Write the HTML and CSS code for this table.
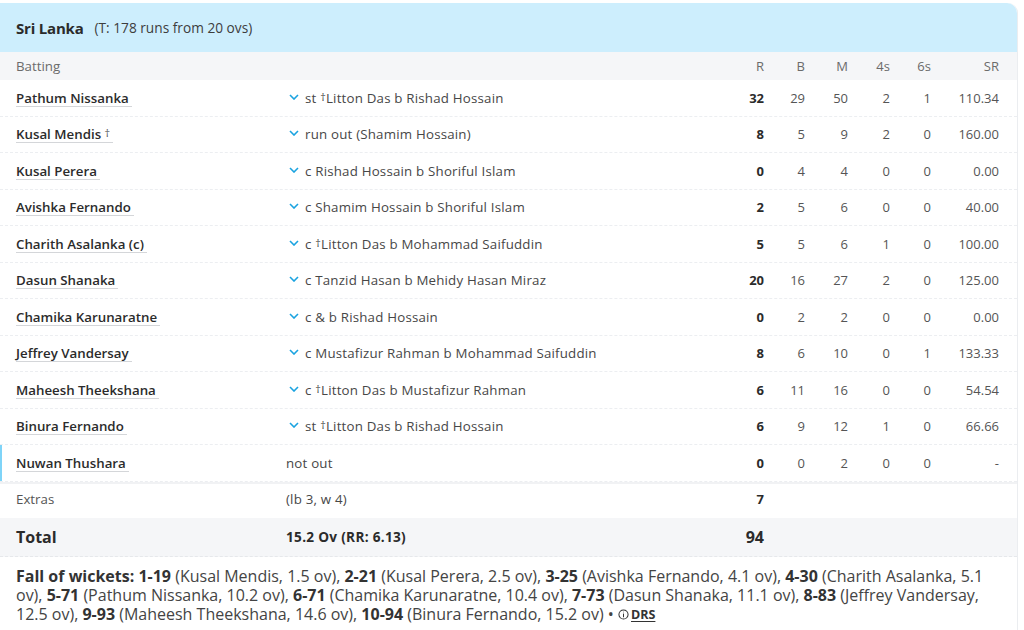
FILE: index.html
```html
<!DOCTYPE html>
<html lang="en">
<head>
<meta charset="utf-8">
<title>Sri Lanka scorecard</title>
<link rel="stylesheet" href="styles.css">
</head>
<body>
<div class="card">
  <div class="card-head">
    <span class="team">Sri Lanka</span>
    <span class="target">(T: 178 runs from 20 ovs)</span>
  </div>

  <div class="row head-row">
    <div class="c-name">Batting</div>
    <div class="c-dis"></div>
    <div class="num">R</div>
    <div class="num">B</div>
    <div class="num">M</div>
    <div class="num">4s</div>
    <div class="num">6s</div>
    <div class="num">SR</div>
  </div>

  <div class="row">
    <div class="c-name"><span class="pname">Pathum Nissanka</span></div>
    <div class="c-dis"><svg class="chev" viewBox="0 0 10 6"><polyline points="1,1 5,5 9,1"/></svg><span>st <span class="dg">†</span>Litton Das b Rishad Hossain</span></div>
    <div class="num runs">32</div><div class="num">29</div><div class="num">50</div><div class="num">2</div><div class="num">1</div><div class="num">110.34</div>
  </div>
  <div class="row">
    <div class="c-name"><span class="pname">Kusal Mendis <span class="dg2">†</span></span></div>
    <div class="c-dis"><svg class="chev" viewBox="0 0 10 6"><polyline points="1,1 5,5 9,1"/></svg><span>run out (Shamim Hossain)</span></div>
    <div class="num runs">8</div><div class="num">5</div><div class="num">9</div><div class="num">2</div><div class="num">0</div><div class="num">160.00</div>
  </div>
  <div class="row">
    <div class="c-name"><span class="pname">Kusal Perera</span></div>
    <div class="c-dis"><svg class="chev" viewBox="0 0 10 6"><polyline points="1,1 5,5 9,1"/></svg><span>c Rishad Hossain b Shoriful Islam</span></div>
    <div class="num runs">0</div><div class="num">4</div><div class="num">4</div><div class="num">0</div><div class="num">0</div><div class="num">0.00</div>
  </div>
  <div class="row">
    <div class="c-name"><span class="pname">Avishka Fernando</span></div>
    <div class="c-dis"><svg class="chev" viewBox="0 0 10 6"><polyline points="1,1 5,5 9,1"/></svg><span>c Shamim Hossain b Shoriful Islam</span></div>
    <div class="num runs">2</div><div class="num">5</div><div class="num">6</div><div class="num">0</div><div class="num">0</div><div class="num">40.00</div>
  </div>
  <div class="row">
    <div class="c-name"><span class="pname">Charith Asalanka (c)</span></div>
    <div class="c-dis"><svg class="chev" viewBox="0 0 10 6"><polyline points="1,1 5,5 9,1"/></svg><span>c <span class="dg">†</span>Litton Das b Mohammad Saifuddin</span></div>
    <div class="num runs">5</div><div class="num">5</div><div class="num">6</div><div class="num">1</div><div class="num">0</div><div class="num">100.00</div>
  </div>
  <div class="row">
    <div class="c-name"><span class="pname">Dasun Shanaka</span></div>
    <div class="c-dis"><svg class="chev" viewBox="0 0 10 6"><polyline points="1,1 5,5 9,1"/></svg><span>c Tanzid Hasan b Mehidy Hasan Miraz</span></div>
    <div class="num runs">20</div><div class="num">16</div><div class="num">27</div><div class="num">2</div><div class="num">0</div><div class="num">125.00</div>
  </div>
  <div class="row">
    <div class="c-name"><span class="pname">Chamika Karunaratne</span></div>
    <div class="c-dis"><svg class="chev" viewBox="0 0 10 6"><polyline points="1,1 5,5 9,1"/></svg><span>c &amp; b Rishad Hossain</span></div>
    <div class="num runs">0</div><div class="num">2</div><div class="num">2</div><div class="num">0</div><div class="num">0</div><div class="num">0.00</div>
  </div>
  <div class="row">
    <div class="c-name"><span class="pname">Jeffrey Vandersay</span></div>
    <div class="c-dis"><svg class="chev" viewBox="0 0 10 6"><polyline points="1,1 5,5 9,1"/></svg><span>c Mustafizur Rahman b Mohammad Saifuddin</span></div>
    <div class="num runs">8</div><div class="num">6</div><div class="num">10</div><div class="num">0</div><div class="num">1</div><div class="num">133.33</div>
  </div>
  <div class="row">
    <div class="c-name"><span class="pname">Maheesh Theekshana</span></div>
    <div class="c-dis"><svg class="chev" viewBox="0 0 10 6"><polyline points="1,1 5,5 9,1"/></svg><span>c <span class="dg">†</span>Litton Das b Mustafizur Rahman</span></div>
    <div class="num runs">6</div><div class="num">11</div><div class="num">16</div><div class="num">0</div><div class="num">0</div><div class="num">54.54</div>
  </div>
  <div class="row">
    <div class="c-name"><span class="pname">Binura Fernando</span></div>
    <div class="c-dis"><svg class="chev" viewBox="0 0 10 6"><polyline points="1,1 5,5 9,1"/></svg><span>st <span class="dg">†</span>Litton Das b Rishad Hossain</span></div>
    <div class="num runs">6</div><div class="num">9</div><div class="num">12</div><div class="num">1</div><div class="num">0</div><div class="num">66.66</div>
  </div>
  <div class="row active">
    <div class="c-name"><span class="pname">Nuwan Thushara</span></div>
    <div class="c-dis plain"><span>not out</span></div>
    <div class="num runs">0</div><div class="num">0</div><div class="num">2</div><div class="num">0</div><div class="num">0</div><div class="num">-</div>
  </div>

  <div class="row extras">
    <div class="c-name light">Extras</div>
    <div class="c-dis plain"><span>(lb 3, w 4)</span></div>
    <div class="num runs">7</div>
  </div>

  <div class="row total">
    <div class="c-name tot-label">Total</div>
    <div class="c-dis tot-ov"><span>15.2 Ov (RR: 6.13)</span></div>
    <div class="num tot-runs">94</div>
  </div>

  <div class="fow">
    <b>Fall of wickets:</b> <b>1-19</b> (Kusal Mendis, 1.5 ov), <b>2-21</b> (Kusal Perera, 2.5 ov), <b>3-25</b> (Avishka Fernando, 4.1 ov), <b>4-30</b> (Charith Asalanka, 5.1 ov), <b>5-71</b> (Pathum Nissanka, 10.2 ov), <b>6-71</b> (Chamika Karunaratne, 10.4 ov), <b>7-73</b> (Dasun Shanaka, 11.1 ov), <b>8-83</b> (Jeffrey Vandersay, 12.5 ov), <b>9-93</b> (Maheesh Theekshana, 14.6 ov), <b>10-94</b> (Binura Fernando, 15.2 ov) &bull; <span class="drs"><svg class="info" viewBox="0 0 12 12"><circle cx="6" cy="6" r="5"/><line x1="6" y1="5" x2="6" y2="9"/><line x1="6" y1="3" x2="6" y2="3.6"/></svg><span class="drs-t">DRS</span></span>
  </div>
</div>
</body>
</html>
```

FILE: styles.css
```css
* { box-sizing: border-box; }

html, body {
  margin: 0;
  padding: 0;
  background: #ffffff;
}

body {
  font-family: "Open Sans", "Noto Sans", sans-serif;
  color: #2b2b2b;
  padding-top: 3px;
}

.card {
  width: 1018px;
  border-right: 1px solid #ebedf0;
  border-top-right-radius: 10px;
  background: #ffffff;
}

.card-head {
  height: 49px;
  background: #cdeefd;
  border-top-right-radius: 10px;
  display: flex;
  align-items: center;
  padding-left: 16px;
  gap: 11px;
}

.team {
  font-size: 15px;
  font-weight: 700;
  color: #2b2b2b;
  letter-spacing: -0.2px;
}

.target {
  font-size: 13.7px;
  color: #3d3d3d;
}

.row {
  display: grid;
  grid-template-columns: 270px 1fr 40px 41px 43px 42px 41px 68px;
  align-items: center;
  padding: 0 18px 0 16px;
  height: 36.5px;
  border-bottom: 1px dashed #eceef1;
  font-size: 13.3px;
}

.head-row {
  height: 28px;
  background: #f5f6f8;
  color: #6b6b6b;
  border-bottom: none;
}

.head-row .num { color: #6b6b6b; }

.c-name { white-space: nowrap; }

.pname {
  font-weight: 600;
  color: #2b2b2b;
  padding-right: 3px;
  border-bottom: 1.5px solid #d4d6d9;
  line-height: 15px;
  display: inline-block;
}

.dg2 {
  font-size: 11px;
  font-weight: 400;
  position: relative;
  top: -2px;
  color: #555;
}

.dg {
  font-size: 11px;
  position: relative;
  top: -2px;
}

.c-dis {
  color: #474747;
  display: flex;
  align-items: center;
  white-space: nowrap;
  letter-spacing: 0.2px;
}

.c-dis .chev {
  width: 10px;
  height: 6px;
  margin: 0 6px 2px 3px;
  fill: none;
  stroke: #1aa3e0;
  stroke-width: 1.6;
  flex: none;
}

.num {
  text-align: right;
  color: #555555;
  font-size: 13px;
}

.num.runs {
  font-weight: 700;
  color: #2b2b2b;
}

.active {
  box-shadow: inset 2px 0 0 #7fd4f8;
}

.extras {
  border-top: 2px solid #f1f2f4;
  height: 36px;
  padding-bottom: 3px;
  border-bottom: none;
}

.light { color: #555; }

.total {
  background: #f5f6f8;
  height: 39px;
  border-bottom: 1px dashed #e6e8eb;
}

.tot-label {
  font-size: 16px;
  font-weight: 700;
}

.tot-ov {
  font-weight: 700;
  color: #2b2b2b;
  font-size: 13.6px;
  letter-spacing: 0.3px;
}

.tot-runs {
  font-size: 16px;
  font-weight: 700;
  color: #2b2b2b;
}

.fow {
  padding: 10px 30px 10px 16px;
  font-size: 16px;
  line-height: 19px;
  color: #444;
}

.fow b {
  font-weight: 700;
  color: #333;
}

.drs {
  display: inline-flex;
  align-items: center;
  gap: 2px;
  font-size: 12.5px;
  font-weight: 700;
  color: #333;
}

.drs-t {
  text-decoration: underline;
  text-underline-offset: 2px;
}

.info {
  width: 11px;
  height: 11px;
  fill: none;
  stroke: #333;
  stroke-width: 1.1;
}
```
